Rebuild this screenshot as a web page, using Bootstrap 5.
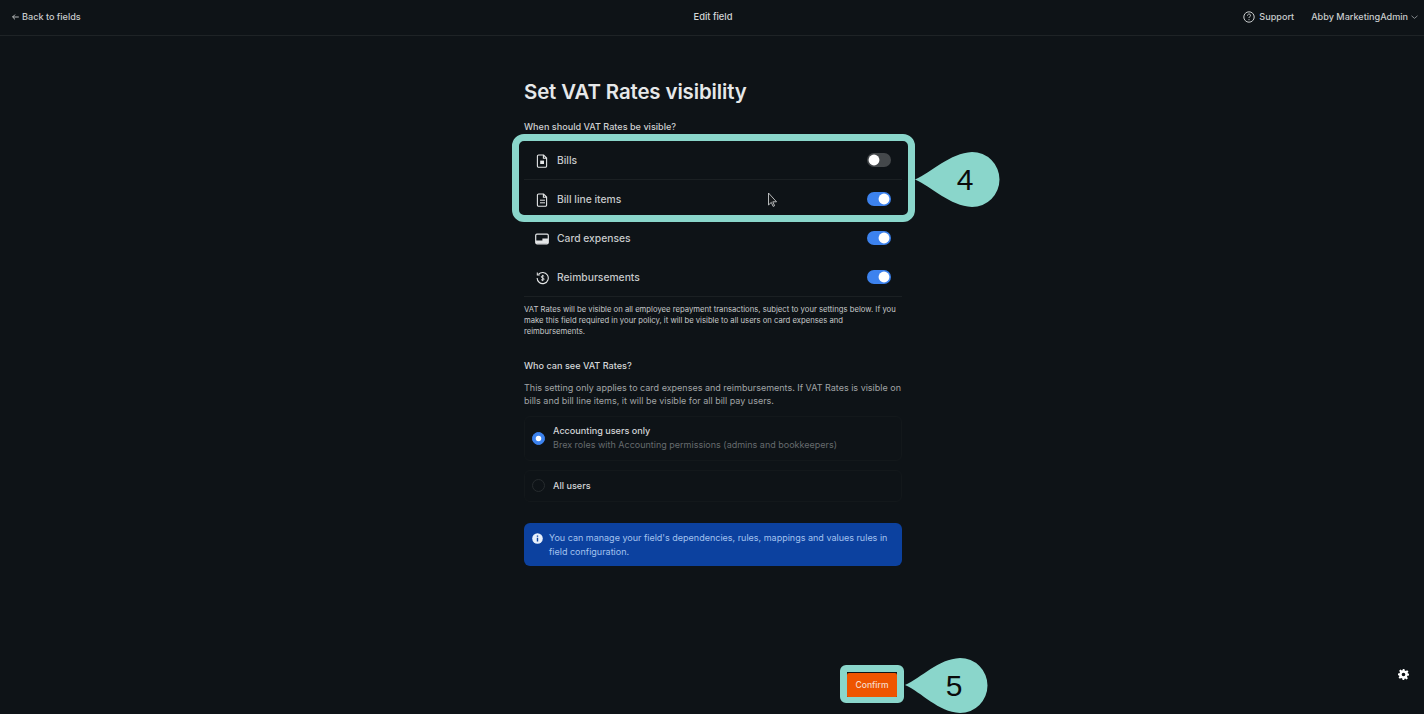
<!DOCTYPE html>
<html lang="en">
<head>
<meta charset="utf-8">
<title>Edit field</title>
<link href="https://cdn.jsdelivr.net/npm/bootstrap@5.3.0/dist/css/bootstrap.min.css" rel="stylesheet">
<style>
html,body{height:100%}
body{background:#0e1317;color:#e4e6e7;font-family:Inter,"Liberation Sans",sans-serif;font-size:10px;overflow:hidden;position:relative}
.topbar{height:36px;border-bottom:1px solid #1e2326;padding:0 6px 1px 8px;display:grid;grid-template-columns:1fr auto 1fr;align-items:center;color:#c9cccd;font-size:9.1px;font-weight:500}
.topbar a{color:inherit;text-decoration:none}
.backlnk{margin-left:4px}
.topctr{font-size:9.3px;color:#d3d6d7}
.pagecol{width:378px;margin:0 auto 0 524px;flex:1 1 auto}
.pagettl{font-size:20.4px;font-weight:600;line-height:28px;margin:42px 0 0;color:#e6e8e9;letter-spacing:-.1px}
.qlabel{font-size:9.1px;font-weight:500;line-height:14px;color:#cfd1d2;margin:14px 0 0}
.rowlist{margin-top:7px;background:transparent;border-radius:0}
.rowitem{height:39px;background:transparent;border:0;border-bottom:1px solid #1b2023;padding:1px 11px 0 12px;color:#c6c9ca;font-size:10.3px;font-weight:500;display:flex;align-items:center;gap:8px;border-radius:0!important}
.rowitem svg{flex:none}
.rowitem .form-switch{margin:-1px 0 0 auto;padding:0;min-height:0;display:flex}
.form-switch .swt{width:24px;height:14px;margin:0;background-color:#44484b;border:0;float:none;background-image:url("data:image/svg+xml,%3csvg xmlns='http://www.w3.org/2000/svg' viewBox='-4 -4 8 8'%3e%3ccircle r='3.1' fill='%23fff'/%3e%3c/svg%3e")}
.form-switch .swt:checked{background-color:#3c82ee}
.noteone{font-size:7.7px;line-height:11px;color:#c6c9ca;margin:7px 0 0}
.qtwo{font-size:9.1px;font-weight:500;line-height:14px;color:#d6d8d9;margin:21.5px 0 0}
.notetwo{font-size:9px;line-height:13.5px;color:#a0a4a6;margin:8px 0 0}
.radcard{border:1px solid #13181b;border-radius:6px;padding:0 7px;display:flex;align-items:center;gap:8px;margin:0;min-height:0}
.radcard .rad{width:13px;height:13px;margin:0;float:none;background-color:transparent;border:1px solid #262b2e;flex:none}
.radcard .rad:checked{background-color:#3c82ee;border-color:#3c82ee}
.radone{height:45px;margin-top:8px}
.radtwo{height:32px;margin-top:9px}
.radttl{font-size:9.1px;font-weight:500;line-height:14px;color:#d3d5d7}
.radsub{font-size:9px;line-height:14px;color:#666b6e}
.infobox{margin:21.5px 0 0;padding:8px 8px;background:#0c419f;border:0;border-radius:6px;color:#a3c2ee;font-size:9px;line-height:13.5px;display:flex;gap:6px}
.infobox svg{flex:none;margin-top:2px}
.ftbar{width:378px;margin:0 auto 16px 524px;display:flex;justify-content:flex-end;padding-right:5px}
.cfmbtn{width:50px;height:25px;padding:0;background:#ee5500;border:0;border-radius:2px;color:#f6dccb;font-size:8.6px;font-weight:500}
.anno{position:absolute;pointer-events:none}
.annobox{border:7px solid #8ad6cb;border-radius:12px;background:transparent}
.geari{position:absolute;left:1398px;top:669px}
</style>
</head>
<body class="d-flex flex-column">
<nav class="topbar">
  <a href="#" class="d-flex align-items-center backlnk" style="gap:3px"><svg width="7" height="8" viewBox="0 0 7 8" fill="none" stroke="#c9cccd" stroke-width=".9"><path d="M6.800 4H.6M3 1.600.6 4 3 6.400"/></svg>Back to fields</a>
  <div class="topctr">Edit field</div>
  <div class="d-flex align-items-center justify-content-end">
    <svg width="12" height="12" viewBox="0 0 12 12" fill="none" stroke="#c9cccd" stroke-width="1" class="me-1"><circle cx="6" cy="6" r="5.200"/><path d="M4.500 4.600c0-2 3-2 3-.2 0 1.200-1.500 1.200-1.500 2.600M6 8.200v1" /></svg>
    <a href="#">Support</a>
    <a href="#" style="margin-left:17px">Abby MarketingAdmin</a>
    <svg width="7" height="6" viewBox="0 0 7 6" fill="none" stroke="#8f9396" stroke-width=".9" style="margin-left:3px"><path d="M.5 1.800 3.500 4.400l3-2.600"/></svg>
  </div>
</nav>
<main class="pagecol">
  <h1 class="pagettl">Set VAT Rates visibility</h1>
  <p class="qlabel">When should VAT Rates be visible?</p>
  <div class="list-group rowlist">
    <div class="list-group-item rowitem">
      <svg width="13" height="14" viewBox="0 0 13 14" fill="none" stroke="#e4e6e7" stroke-width="1.100"><path d="M2.600 1h5l3 3v8a1.200 1.200 0 0 1-1.200 1.200H2.600A1.200 1.200 0 0 1 1.400 12V2.200A1.200 1.200 0 0 1 2.600 1zM7.400 1v3.200h3.200"/><path d="M4.200 6.600h3.800v3.400H4.200z" fill="#e4e6e7" stroke="none"/></svg>
      <span>Bills</span>
      <div class="form-check form-switch"><input class="form-check-input swt" type="checkbox" role="switch" aria-label="Bills"></div>
    </div>
    <div class="list-group-item rowitem">
      <svg width="13" height="14" viewBox="0 0 13 14" fill="none" stroke="#e4e6e7" stroke-width="1.100"><path d="M2.600 1h5l3 3v8a1.200 1.200 0 0 1-1.200 1.200H2.600A1.200 1.200 0 0 1 1.400 12V2.200A1.200 1.200 0 0 1 2.600 1zM7.400 1v3.200h3.200"/><path d="M4 7.200h5M4 9.800h5" stroke-width="1"/></svg>
      <span>Bill line items</span>
      <div class="form-check form-switch"><input class="form-check-input swt" type="checkbox" role="switch" checked aria-label="Bill line items"></div>
    </div>
    <div class="list-group-item rowitem" style="border-bottom-color:transparent">
      <svg width="14" height="14" viewBox="0 0 14 14" fill="none" style="margin-left:-1px"><rect x=".7" y="2.200" width="12.600" height="9.600" rx="1.200" stroke="#e4e6e7" stroke-width="1.200"/><path d="M1 11.500V8.600h6.400V6.400H13v5.100z" fill="#e4e6e7"/></svg>
      <span>Card expenses</span>
      <div class="form-check form-switch"><input class="form-check-input swt" type="checkbox" role="switch" checked aria-label="Card expenses"></div>
    </div>
    <div class="list-group-item rowitem">
      <svg width="13" height="14" viewBox="0 0 14 14" fill="none" stroke="#e4e6e7" stroke-width="1.200"><path d="M2.600 3.200A6 6 0 1 1 1.200 7"/><path d="M1.400 1.200v2.600H4" stroke-width="1.100"/><path d="M8.800 5.200c-.4-.7-2.900-1-3.100.5-.2 1.600 3.200.9 3 2.600-.2 1.400-2.700 1.100-3.300.3M7.200 3.600v6.800" stroke-width="1"/></svg>
      <span>Reimbursements</span>
      <div class="form-check form-switch"><input class="form-check-input swt" type="checkbox" role="switch" checked aria-label="Reimbursements"></div>
    </div>
  </div>
  <p class="noteone">VAT Rates will be visible on all employee repayment transactions, subject to your settings below. If you make this field required in your policy, it will be visible to all users on card expenses and reimbursements.</p>
  <p class="qtwo">Who can see VAT Rates?</p>
  <p class="notetwo">This setting only applies to card expenses and reimbursements. If VAT Rates is visible on bills and bill line items, it will be visible for all bill pay users.</p>
  <label class="form-check radcard radone">
    <input class="form-check-input rad" type="radio" name="who" checked>
    <span><span class="d-block radttl">Accounting users only</span><span class="d-block radsub">Brex roles with Accounting permissions (admins and bookkeepers)</span></span>
  </label>
  <label class="form-check radcard radtwo">
    <input class="form-check-input rad" type="radio" name="who">
    <span class="radttl">All users</span>
  </label>
  <div class="alert infobox" role="alert">
    <svg width="11" height="11" viewBox="0 0 11 11"><circle cx="5.500" cy="5.500" r="5.300" fill="#e8f0fb"/><path d="M4.800 4.700h1.400v3.800H4.800zM4.800 2.400h1.400v1.300H4.800z" fill="#0c419f"/></svg>
    <span>You can manage your field's dependencies, rules, mappings and values rules in field configuration.</span>
  </div>
</main>
<footer class="ftbar"><button type="button" class="btn cfmbtn">Confirm</button></footer>
<svg class="geari" width="11" height="11" viewBox="0 0 24 24" fill="#fff"><path fill-rule="evenodd" d="M10 0h4l.7 3.400 2.300 1 3-1.900 2.800 2.800-1.900 3 1 2.300L24 10v4l-3.400.7-1 2.300 1.900 3-2.800 2.800-3-1.900-2.300 1L14 24h-4l-.7-3.400-2.300-1-3 1.900-2.800-2.800 1.900-3-1-2.300L0 14v-4l3.400-.7 1-2.300-1.900-3L5.300 1.200l3 1.900 2.300-1zM12 8a4 4 0 1 0 0 8 4 4 0 0 0 0-8z"/></svg>

<!-- annotation overlay -->
<svg class="anno" style="left:763px;top:188px" width="16" height="20" viewBox="0 0 16 20"><path d="M5.500 5v12l2.800-2.600 1.800 4 1.500-.7-1.800-3.900h3.700z" fill="#16191b" stroke="#c9cccd" stroke-width=".9"/></svg>
<div class="anno annobox" style="left:512px;top:134px;width:403px;height:88px"></div>
<div class="anno annobox" style="left:840px;top:665px;width:64px;height:38px;border-radius:6px;border-width:7px 7px 6px 7px"></div>
<svg class="anno" style="left:912px;top:150px" width="92" height="60" viewBox="0 0 92 60"><path d="M3 29.500C20 22 38 3 60 2a27.500 27.500 0 0 1 0 55C38 56 20 37 3 29.500z" fill="#8ad6cb"/><text x="53" y="40" font-family="Liberation Sans" font-size="30" text-anchor="middle" fill="#0a0a0a">4</text></svg>
<svg class="anno" style="left:902px;top:656px" width="92" height="60" viewBox="0 0 92 60"><path d="M3 29C20 21.500 36 3 58 2a27.500 27.500 0 0 1 0 55C36 56 20 36.500 3 29z" fill="#8ad6cb"/><text x="52" y="40" font-family="Liberation Sans" font-size="30" text-anchor="middle" fill="#0a0a0a">5</text></svg>
<script src="https://cdn.jsdelivr.net/npm/bootstrap@5.3.0/dist/js/bootstrap.bundle.min.js"></script>
</body>
</html>
